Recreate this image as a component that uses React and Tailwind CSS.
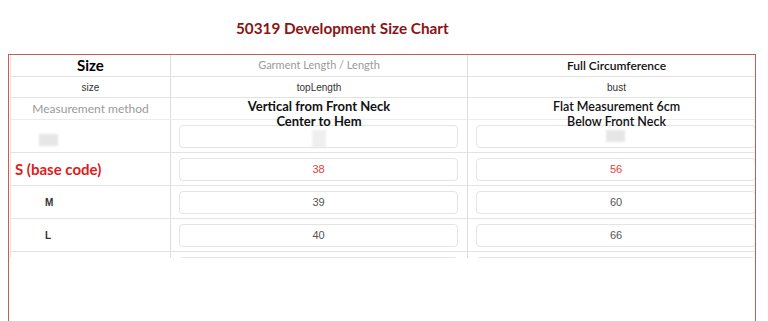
const rows = [
  { size: "S (base code)", base: true, length: "38", bust: "56" },
  { size: "M", length: "39", bust: "60" },
  { size: "L", length: "40", bust: "66" },
];

function Blur({ className }) {
  return <span className={"inline-block bg-[#e6e6e6] blur-[1px] " + className} />;
}

function Box({ children, red }) {
  return (
    <div
      className={
        "h-[23px] w-full rounded-[4px] border border-[#e4e4e4] flex items-center justify-center text-[11px] font-['Liberation_Sans',Arial,sans-serif] " +
        (red ? "text-[#e2403d]" : "text-[#555]")
      }
    >
      {children}
    </div>
  );
}

export default function App() {
  return (
    <div className="w-[768px] h-[321px] overflow-hidden bg-white font-['Lato',sans-serif]">
      <div className="h-[54px] pt-[18px] pl-[236px]">
        <h1 className="text-[15.3px] leading-[20px] font-bold text-[#8b1414]">50319 Development Size Chart</h1>
      </div>

      <div className="ml-[8px] w-[748px] h-[300px] border border-[#c65b58]">
        <div className="ml-px h-[203px] overflow-hidden border-l border-[#f4dcdc]">
          <div className="w-[760px]">
            {/* header */}
            <div className="flex h-[22px] border-b border-[#e3e3e3]">
              <div className="w-[160px] shrink-0 border-r border-[#dedede] flex items-center justify-center text-[15px] font-bold text-black">Size</div>
              <div className="w-[297px] shrink-0 border-r border-[#dedede] flex items-center justify-center text-[11px] text-[#9a9a9a]">Garment Length / Length</div>
              <div className="w-[297px] shrink-0 flex items-center justify-center text-[12px] font-semibold text-[#111]">Full Circumference</div>
            </div>

            <div className="flex h-[21px] border-b border-[#e3e3e3] font-['Liberation_Sans',Arial,sans-serif] text-[10px] text-[#333]">
              <div className="w-[160px] shrink-0 border-r border-[#dedede] flex items-center justify-center">size</div>
              <div className="w-[297px] shrink-0 border-r border-[#dedede] flex items-center justify-center">topLength</div>
              <div className="w-[297px] shrink-0 flex items-center justify-center">bust</div>
            </div>

            <div className="relative z-10 flex h-[22px] border-b border-[#ececec]">
              <div className="w-[160px] shrink-0 border-r border-[#dedede] flex items-center justify-center text-[12px] text-[#9a9a9a]">Measurement method</div>
              <div className="w-[297px] shrink-0 border-r border-[#dedede] pt-[1px] text-center text-[13px] leading-[15px] font-bold text-[#111] whitespace-nowrap">
                Vertical from Front Neck
                <br />
                Center to Hem
              </div>
              <div className="w-[297px] shrink-0 pt-[1px] text-center text-[12.5px] leading-[15px] font-semibold text-[#111] whitespace-nowrap">
                Flat Measurement 6cm
                <br />
                Below Front Neck
              </div>
            </div>

            {/* blank row */}
            <div className="flex h-[33px] border-b border-[#e3e3e3]">
              <div className="w-[160px] shrink-0 border-r border-[#dedede] pt-[8px] pl-[28px]">
                <Blur className="w-[19px] h-[12px] block" />
              </div>
              <div className="w-[297px] shrink-0 border-r border-[#dedede] pt-[5px] pl-[8px] pr-[9px]">
                <Box>
                  <Blur className="w-[14px] h-[18px] mt-[4px] opacity-60" />
                </Box>
              </div>
              <div className="w-[297px] shrink-0 pt-[5px] pl-[8px] pr-[9px]">
                <Box>
                  <Blur className="w-[19px] h-[12px] -mt-[2px] ml-[-2px]" />
                </Box>
              </div>
            </div>

            {rows.map((r, i) => (
              <div key={i} className="flex h-[33px] border-b border-[#e3e3e3]">
                <div className="w-[160px] shrink-0 border-r border-[#dedede] flex items-center">
                  {r.base ? (
                    <span className="pl-[4px] text-[15px] font-bold text-[#e01b1b]">{r.size}</span>
                  ) : (
                    <span className="pl-[34px] text-[10px] font-bold text-[#333] font-['Liberation_Sans',Arial,sans-serif]">{r.size}</span>
                  )}
                </div>
                <div className="w-[297px] shrink-0 border-r border-[#dedede] pt-[5px] pl-[8px] pr-[9px]">
                  <Box red={r.base}>{r.length}</Box>
                </div>
                <div className="w-[297px] shrink-0 pt-[5px] pl-[8px] pr-[9px]">
                  <Box red={r.base}>{r.bust}</Box>
                </div>
              </div>
            ))}

            {/* next row, scrolled out of view */}
            <div className="flex h-[33px]">
              <div className="w-[160px] shrink-0 border-r border-[#dedede]" />
              <div className="w-[297px] shrink-0 border-r border-[#dedede] pt-[5px] pl-[8px] pr-[9px]">
                <Box />
              </div>
              <div className="w-[297px] shrink-0 pt-[5px] pl-[8px] pr-[9px]">
                <Box />
              </div>
            </div>
          </div>
        </div>
      </div>
    </div>
  );
}
